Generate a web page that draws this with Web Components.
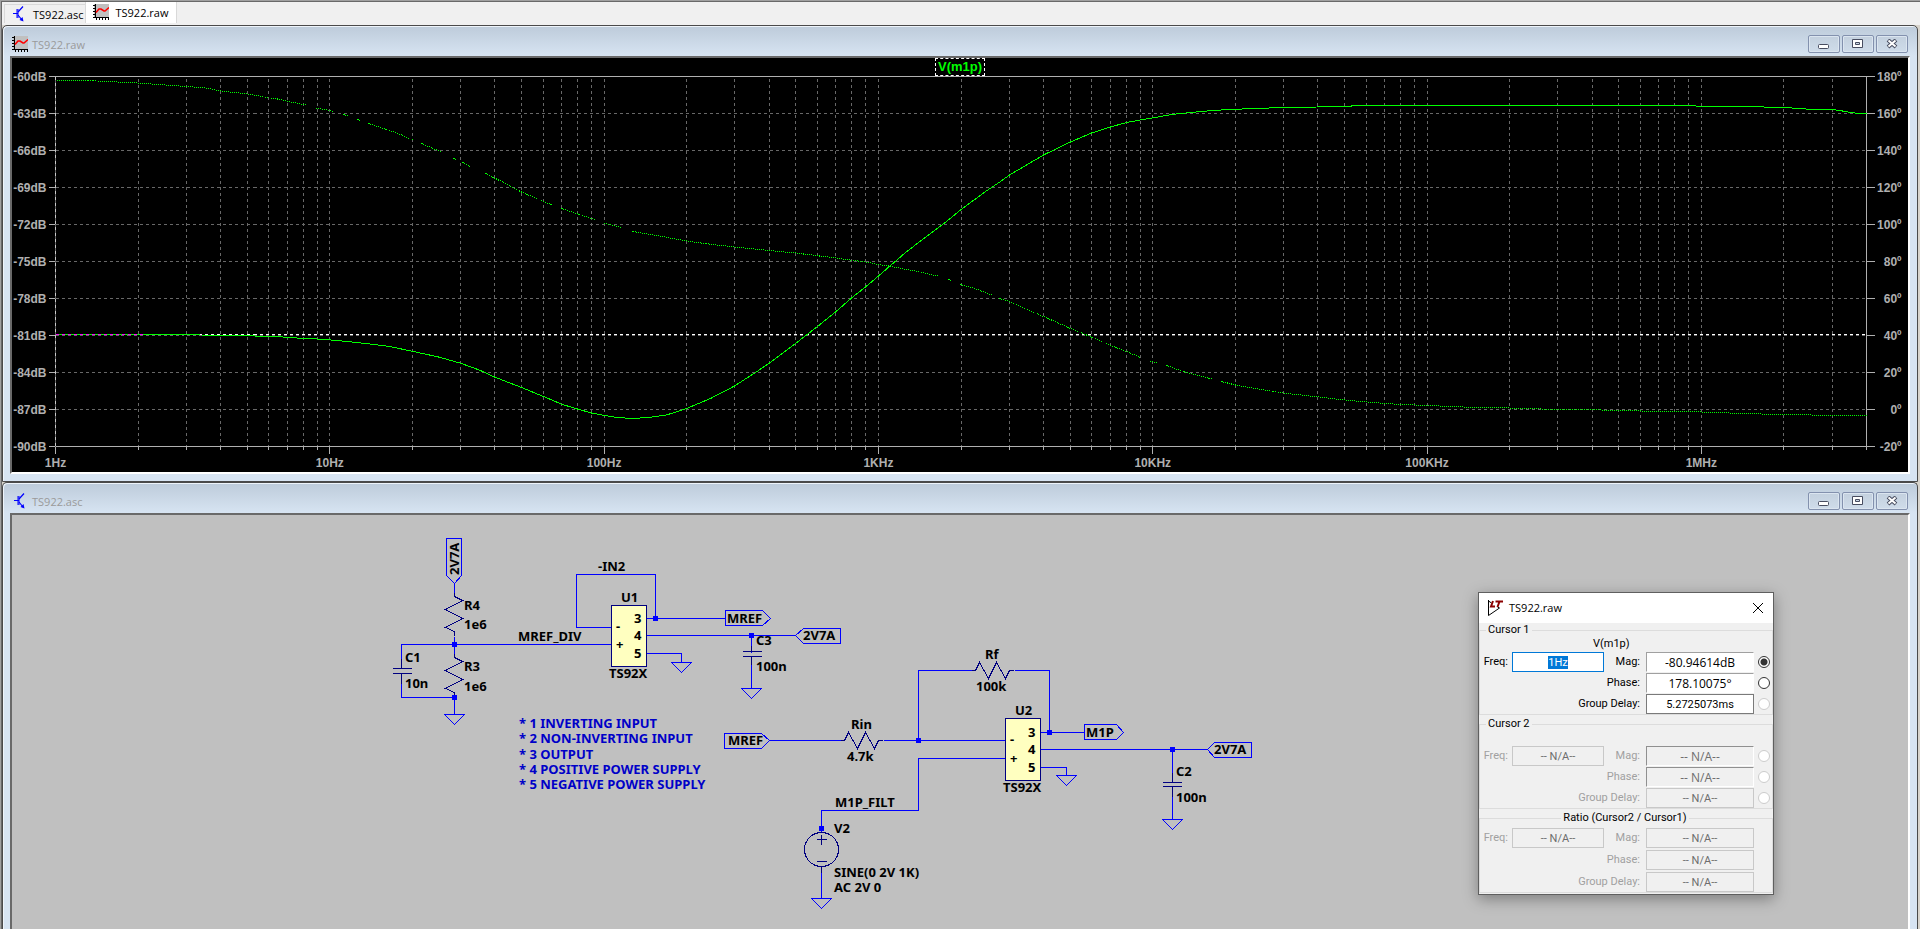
<!DOCTYPE html>
<html lang="en">
<head>
<meta charset="utf-8">
<title>TS922.raw</title>
<style>
  html, body { height: 100%; }
  body {
    margin: 0;
    overflow: hidden;
    background: #f0f0f0;
    font: 11px/16px "Open Sans", "Noto Sans", sans-serif;
  }
</style>
</head>
<body>
<lt-workspace>
  <lt-tab slot="tabs" icon="schematic">TS922.asc</lt-tab>
  <lt-tab slot="tabs" icon="waveform" active>TS922.raw</lt-tab>
  <mdi-window icon="waveform" caption="TS922.raw"><bode-plot></bode-plot></mdi-window>
  <mdi-window icon="schematic" caption="TS922.asc" fill>
    <schematic-sheet></schematic-sheet>
  </mdi-window>
  <cursor-dialog slot="dialog"></cursor-dialog>
</lt-workspace>

<script>
(() => {
  const define = (name, html, setup) => {
    const template = document.createElement("template");
    template.innerHTML = html;
    customElements.define(name, class extends HTMLElement {
      connectedCallback() {
        if (this.shadowRoot) return;
        this.attachShadow({ mode: "open" });
        this.shadowRoot.appendChild(template.content.cloneNode(true));
        if (setup) setup(this, this.shadowRoot);
      }
    });
  };

  const icons = {
    schematic: `<path d="M2 7.500h5M6 3v9M7 3v9" stroke="#00f"/><path d="M7 6l5-5.500M7 9l4 5" stroke="#00f" stroke-width="1.200" fill="none"/><path d="M12.500 15.500l-1-4.500-3 3z" fill="#00f"/>`,
    waveform: `<path d="M1 0h15v14H1z" fill="#c0c0c0"/><path d="M2.500 0v14M0 1.500h2M0 4.500h2M0 7.500h2M0 10.500h2M0 13.500h16M3.500 14v2M6.500 14v2M9.500 14v2M12.500 14v2M15.500 14v2" stroke="#000"/><path d="M3 8.500l3-3.500h2l3 2h1l4-3.500" stroke="#f00" stroke-width="1.600" fill="none"/>`,
    app: `<path d="M1.500 0v15.500l11-7.500M1.500 1l3 2M12.500 8l-2-1" stroke="#000" fill="none"/><path d="M6 1L4 6.500h4M8.500 1.500H16M12.500 1.500l-2 5.500" stroke="#8b0000" stroke-width="2" fill="none"/>`,
  };

  define("lt-icon", `
  <style>
    :host { display: block; flex: none; width: 16px; height: 16px; }
    svg { display: block; }
  </style>
  <svg width="16" height="16" aria-hidden="true"></svg>
  `, (host, root) => {
    root.querySelector("svg").innerHTML = icons[host.getAttribute("name")];
  });

  define("lt-tab", `
  <style>
    :host { display: block; padding-top: 2px; }
    :host([active]) { padding-top: 0; }
    button {
      display: flex;
      align-items: center;
      gap: 6px;
      height: 19px;
      padding: 0 2px 0 6px;
      border: solid #d9d9d9;
      border-width: 1px 0 0 1px;
      background: #f0f0f0;
      font: inherit;
      color: #000;
    }
    :host([active]) button {
      height: 21px;
      padding: 0 8px 2px 7px;
      border-width: 0 1px 0 1px;
      background: #fff;
    }
    span { padding-top: 2px; }
  </style>
  <button type="button" role="tab"><lt-icon></lt-icon><span><slot></slot></span></button>
  `, (host, root) => {
    root.querySelector("button").setAttribute("aria-selected", host.hasAttribute("active"));
    const icon = document.createElement("lt-icon");
    icon.setAttribute("name", host.getAttribute("icon"));
    root.querySelector("lt-icon").replaceWith(icon);
  });

  define("lt-workspace", `
  <style>
    :host {
      display: flex;
      flex-direction: column;
      box-sizing: border-box;
      height: 100vh;
      border: solid #696969;
      border-width: 1px 0 0 1px;
      outline: 1px solid #a0a0a0;
      margin: 1px 0 0 1px;
      overflow: hidden;
    }
    nav { display: flex; height: 23px; padding-left: 2px; }
    main {
      flex: 1;
      display: flex;
      flex-direction: column;
      min-height: 0;
      padding-right: 2px;
      background: #d8d4cc;
    }
  </style>
  <nav role="tablist"><slot name="tabs"></slot></nav>
  <main><slot></slot></main>
  <slot name="dialog"></slot>
  `);

  define("mdi-window", `
  <style>
    :host {
      display: flex;
      flex-direction: column;
      box-sizing: border-box;
      border: 1px solid #4a4a4a;
      border-radius: 5px 5px 0 0;
      background: linear-gradient(#bdcbda, #d7e4f2 30px);
      box-shadow: inset 1px 1px #eef4fa;
      padding: 0 7px;
    }
    :host([fill]) { flex: 1; min-height: 0; border-bottom: 0; }
    :host(:not([fill])) { padding-bottom: 7px; }
    header { display: flex; align-items: center; height: 30px; padding: 0 2px; color: #9a9a9a; }
    .caption { flex: 1; padding: 7px 0 0 4px; }
    lt-icon { padding-top: 5px; }
    .buttons { display: flex; gap: 2px; padding-top: 5px; }
    button {
      display: grid;
      place-items: center;
      width: 32px;
      height: 18px;
      padding: 0;
      border: 1px solid #8391ae;
      border-radius: 2px;
      background: linear-gradient(#c3d0de, #cfdcea);
      box-shadow: inset 0 0 0 1px #dbe5f0;
    }
    .content {
      flex: 1;
      min-height: 0;
      border-style: solid;
      border-color: #696969 #fff #fff #696969;
      border-width: 2px;
      overflow: hidden;
    }
    :host([fill]) .content { border-bottom: 0; }
  </style>
  <header>
    <lt-icon></lt-icon>
    <span class="caption"></span>
    <div class="buttons">
      <button type="button" aria-label="Minimize"><svg width="12" height="12"><rect x=".5" y="6.500" width="10" height="4" rx="1" fill="#fff" stroke="#484d60"/></svg></button>
      <button type="button" aria-label="Maximize"><svg width="12" height="10"><path d="M.5.5h10v8H.5zM3.500 3.500v2h4v-2z" fill="#fff" fill-rule="evenodd" stroke="#484d60"/></svg></button>
      <button type="button" aria-label="Close"><svg width="12" height="10"><path d="M2 1l8 7M10 1L2 8" stroke="#484d60" stroke-width="4"/><path d="M2.500 1.500l7 6M9.500 1.500l-7 6" stroke="#fff" stroke-width="2"/></svg></button>
    </div>
  </header>
  <div class="content"><slot></slot></div>
  `, (host, root) => {
    root.querySelector(".caption").textContent = host.getAttribute("caption");
    const icon = document.createElement("lt-icon");
    icon.setAttribute("name", host.getAttribute("icon"));
    root.querySelector("lt-icon").replaceWith(icon);
  });

  // Traces in frame units: 1811 wide (log frequency), 370 tall.
  const magnitude = "90,258 199,259 200,260 227,260 228,261 255,262 282,264 310,267 334,270 358,275 383,280.500 406,287 425,294 439,300.500 466,311 488,320 507,328 522,332.500 536,336.500 549,339 562,341 577,342 593,341 611,338.500 631,332 655,322 679,309.500 700,296 714,286.500 740,267 762,250 780,235.500 796,221.500 810,210.500 823,199.500 850,176 871,160 891,145 905,133.500 930,115 945,105 954,98.500 988,78.500 1015,65.500 1036,56.500 1055,50.500 1071,46 1085,43.500 1097,41.500 1116,38 1145,35 1173,33 1200,32 1228,31 1295,30 1297,29 1640,29 1641,30 1708,30 1709,31 1736,31 1737,32 1750,32 1751,33 1777,33 1787,34.500 1795,36 1804,37 1811,37";
  const phase = [
    "1,4 33,4 49,5 75,6 89,7 102,8 117,9 130,10 145,11 153,12 163,14 178,16 188,17 195,18 211,21 222,22.500 238,26 251,28.500",
    "261,31.500 274,34 279,35",
    "288,38 293,39.500",
    "302,43 305,44",
    "313,47 330,52.500 345,58 358,64",
    "366,67 387,76",
    "398,82 401,83.500",
    "407,86 415,90",
    "430,97 447,105.500 466,115.500 488,125 497,128.500",
    "506,132 522,137.500 536,142 540,143",
    "549,146.500 566,151",
    "577,155 595,158 612,161 631,164.500 653,167.500 679,170.500 714,174 740,176.500 780,181.500 810,185.500 823,188 833,189.500 862,195 882,199.500",
    "893,203 897,204",
    "905,208 919,212 936,218.500",
    "944,222 954,225 967,231 988,240 1015,252 1037,261 1055,269 1071,275 1085,281",
    "1095,284.500 1102,286.500",
    "1111,289 1129,295.500 1147,300 1157,302.500",
    "1166,305 1180,308.500 1203,312.500 1228,316.500 1263,320.500 1289,323.500 1311,325.500 1338,327.500 1372,329 1407,330.500 1454,331.500 1503,333 1545,333.500 1585,334.500 1646,335.500 1688,337 1722,338 1755,338.500 1811,339.500",
  ];

  define("bode-plot", `
  <style>
    :host { display: flex; flex-direction: column; background: #000; }
    .trace { align-self: center; height: 16px; padding: 0 2px; border: 1px dashed #fff; font: bold 13px/15px "Liberation Sans", sans-serif; color: #00ff00; }
    .frame { margin: 0 42px 26px 43px; }
    svg { display: block; width: 100%; height: 370px; overflow: visible; }
    text { font: bold 12px "Liberation Sans", sans-serif; fill: #b0b0b0; }
    .grid { stroke: #686868; stroke-dasharray: 3 3; }
    .edge { stroke: #686868; }
    .axis { stroke: #b0b0b0; }
    .marker { stroke: #c8c8c8; stroke-dasharray: 3 3; }
    .cursor { stroke: #fff; stroke-dasharray: 3 3; }
    polyline { fill: none; stroke: #00ff00; vector-effect: non-scaling-stroke; }
    .phase { stroke-dasharray: 1 1; }
    .overlap { stroke: #ff00ff; stroke-dasharray: 3 3; }
  </style>
  <div class="trace">V(m1p)</div>
  <div class="frame"><svg shape-rendering="crispEdges"></svg></div>
  `, (host, root) => {
    const span = Math.log10(4e6);
    const pos = (hz) => (Math.log10(hz) / span) * 100 + "%";
    const line = (cls, x1, y1, x2, y2) =>
      `<line class="${cls}" x1="${x1}" y1="${y1}" x2="${x2}" y2="${y2}"/>`;
    let out = "";
    for (let i = 0; i <= 10; i++) {
      const y = i * 37;
      if (i > 0 && i < 10) out += line("grid", 0, y, "100%", y);
      out += line("axis", -7, y, 0, y);
      out += `<text x="-9" y="${y + 4}" text-anchor="end">${-60 - i * 3}dB</text>`;
      out += `<svg x="100%" overflow="visible">${line("axis", 0, y, 8, y)}<text x="35" y="${y + 4}" text-anchor="end">${180 - i * 20}º</text></svg>`;
    }
    const names = ["1Hz", "10Hz", "100Hz", "1KHz", "10KHz", "100KHz", "1MHz"];
    names.forEach((name, d) => {
      for (let k = 1; k < 10; k++) {
        const hz = k * 10 ** d;
        if (hz > 4e6) break;
        const x = pos(hz);
        if (hz > 1 && hz < 4e6) out += line("grid", x, 2, x, 370);
        out += line("axis", x, 370, x, k === 1 ? 377 : 373);
      }
      out += `<text x="${pos(10 ** d)}" y="390" text-anchor="middle">${name}</text>`;
    });
    out += line("axis", 0, 0, "100%", 0) + line("axis", 0, 370, "100%", 370) + line("axis", "100%", 0, "100%", 370);
    out += line("edge", 0, 0, 0, 370) + line("marker", 0, 0, 0, 370) + line("cursor", 0, 258, "100%", 258);
    const traces = `<svg width="100%" height="370" viewBox="0 0 1811 370" preserveAspectRatio="none">
      <polyline points="0,258 90,258"/>
      <polyline class="overlap" points="0,258 90,258"/>
      <polyline points="${magnitude}"/>
      ${phase.map((p) => `<polyline class="phase" points="${p}"/>`).join("")}
    </svg>`;
    root.querySelector("svg").innerHTML = `<g transform="translate(.5 .5)">${out}${traces}</g>`;
  });

  const resistorV = (x, y) => `<path class="part" d="M${x} ${y}v4l8 4-17 9 17 9-17 9 9 4v4"/>`;
  const resistorH = (x, y) => `<path class="part" d="M${x} ${y}h4l4-8 9 16 8-16 9 16 4-8h4"/>`;
  const ground = (x, y) => `<path d="M${x - 10} ${y}h20l-10 10z"/>`;
  const node = (x, y) => `<rect class="node" x="${x - 2}" y="${y - 2}" width="4" height="4"/>`;
  const label = (x, y, text) => `<text x="${x}" y="${y}">${text}</text>`;
  const opamp = (x, y, h) => `<rect class="chip" x="${x}" y="${y}" width="35" height="${h}"/>`;

  define("schematic-sheet", `
  <style>
    :host { display: block; height: 100%; background: #c0c0c0; }
    svg { display: block; width: 100%; height: 100%; }
    path, rect, circle { fill: none; stroke: #0000ff; }
    .part { stroke: #000080; }
    .chip { fill: #ffffc0; stroke: #000080; }
    .node { fill: #0000ff; }
    text { font: bold 13px "Noto Sans", sans-serif; fill: #000; }
    .note text { fill: #0000c8; }
  </style>
  <svg>
    <g class="wires" transform="translate(-11.500 -514.500)" shape-rendering="crispEdges"></g>
    <g class="labels" transform="translate(-12 -515)"></g>
  </svg>
  `, (host, root) => {
    const notes = ["* 1 INVERTING INPUT", "* 2 NON-INVERTING INPUT", "* 3 OUTPUT", "* 4 POSITIVE POWER SUPPLY", "* 5 NEGATIVE POWER SUPPLY"];
    root.querySelector(".wires").innerHTML = `
      <path d="M446 538h15v37l-7 8-8-8zM454 583v9M454 636v17M454 697v17M401 668v-24h210M401 673v24h53"/>
      ${resistorV(454, 592)}${resistorV(454, 653)}
      <path class="part" d="M401 658v10M392 668h19M392 673h19M401 673v10"/>
      ${ground(454, 714)}${node(454, 644)}${node(454, 697)}
      <path d="M611 627h-35v-53h79v44M646 618h79M725 610h37l8 8-8 7h-37zM646 635h149l8-7h37v15h-37l-8-8M646 653h35v9M751 635v17M751 656v32"/>
      <path class="part" d="M751 645v6M742 651h19M742 656h19M751 656v8"/>
      ${ground(681, 662)}${ground(751, 688)}${node(655, 618)}${node(751, 635)}
      ${opamp(611, 605, 61)}

      <path d="M724 733h37l8 7-8 8h-37zM769 740h71M883 740h122M918 740v-70h54M1014 670h35v62M1040 732h44M1084 724h32l7 8-7 7h-32zM1040 749h167l7-7h37v15h-37l-7-8M1040 767h26v8M1172 749v33M1172 786v33M1005 758h-87v52h-97v22M821 866v32"/>
      ${resistorH(840, 740)}${resistorH(971, 670)}
      <path class="part" d="M1172 772v10M1162 782h19M1162 786h19M1172 786v10M821 834v10M816 839h10M816 861h10M821 866v6"/>
      <circle class="part" cx="821" cy="849" r="17"/>
      ${ground(1066, 775)}${ground(1172, 819)}${ground(821, 898)}
      ${node(918, 740)}${node(1049, 732)}${node(1172, 749)}${node(821, 828)}
      ${opamp(1005, 718, 62)}`;
    root.querySelector(".labels").innerHTML = `
      <text transform="translate(459 575) rotate(-90)">2V7A</text>
      ${label(464, 610, "R4")}${label(464, 629, "1e6")}${label(464, 671, "R3")}${label(464, 691, "1e6")}
      ${label(405, 662, "C1")}${label(405, 688, "10n")}
      ${label(518, 641, "MREF_DIV")}${label(598, 571, "-IN2")}${label(621, 602, "U1")}${label(609, 678, "TS92X")}
      ${label(616, 631, "-")}${label(616, 649, "+")}${label(634, 623, "3")}${label(634, 640, "4")}${label(634, 658, "5")}
      ${label(727, 623, "MREF")}${label(803, 640, "2V7A")}${label(756, 645, "C3")}${label(756, 671, "100n")}
      ${label(728, 745, "MREF")}${label(851, 729, "Rin")}${label(847, 761, "4.7k")}
      ${label(985, 659, "Rf")}${label(976, 691, "100k")}${label(1015, 715, "U2")}${label(1003, 792, "TS92X")}
      ${label(1010, 744, "-")}${label(1010, 763, "+")}${label(1028, 737, "3")}${label(1028, 754, "4")}${label(1028, 772, "5")}
      ${label(1086, 737, "M1P")}${label(1214, 754, "2V7A")}${label(1176, 776, "C2")}${label(1176, 802, "100n")}
      ${label(835, 807, "M1P_FILT")}${label(834, 833, "V2")}${label(834, 877, "SINE(0 2V 1K)")}${label(834, 892, "AC 2V 0")}
      <g class="note">${notes.map((note, i) => label(519, 728 + Math.round(i * 15.25), note)).join("")}</g>`;
  });

  define("cursor-group", `
  <style>
    :host { display: block; font: 11px/14px Roboto, sans-serif; }
    fieldset { margin: 0; padding: 0 2px 0 0; border: 1px solid #dcdcdc; min-width: 0; }
    legend { margin-left: 6px; padding: 0 2px; height: 14px; }
    :host([center]) legend { margin: 0 auto; }
    .name { height: 15px; padding-left: 113px; }
    :host([center]) .name { height: 3px; }
    .rows {
      display: grid;
      grid-template-columns: 28px 92px 1fr 108px 12px;
      grid-auto-rows: 20px;
      align-items: center;
      gap: 1px 4px;
    }
    :host([center]) .rows { row-gap: 2px; }
    label { text-align: right; }
    .mag { padding-right: 2px; }
    .wide { grid-column: 1 / 4; padding-right: 2px; }
    input { box-sizing: border-box; margin: 0; }
    input[type="text"] {
      width: 100%;
      height: 20px;
      padding: 0;
      border: 1px solid #7a7a7a;
      background: #fff;
      font: inherit;
      text-align: center;
      outline: 0;
    }
    input.big[type="text"] { font: 12px "Open Sans", sans-serif; border-color: #a0a0a0 #fff #fff #a0a0a0; }
    input.freq[type="text"] { border: 1px solid #0078d7; }
    input::selection { background: #0078d7; color: #fff; }
    :host([disabled]) label { color: #a0a0a0; }
    :host([disabled]) input[type="text"] { background: #f0f0f0; color: #6d6d6d; border: 1px solid #c8c8c8; }
    :host([disabled]) input.big[type="text"] { border-color: #909090 #fff #fff #909090; }
    input[type="radio"] { appearance: none; width: 12px; height: 12px; border: 1px solid #333; border-radius: 50%; background: #fff; }
    input[type="radio"]:checked { background: radial-gradient(#333 0 3px, #fff 4px); }
    input[type="radio"]:disabled { border-color: #ccc; }
  </style>
  <fieldset>
    <legend></legend>
    <div class="name"></div>
    <div class="rows">
      <label for="freq">Freq:</label><input type="text" id="freq" class="freq">
      <label for="mag" class="mag">Mag:</label><input type="text" id="mag" class="big" readonly><input type="radio" name="attach" aria-label="Use magnitude">
      <label for="phase" class="wide">Phase:</label><input type="text" id="phase" class="big" readonly><input type="radio" name="attach" aria-label="Use phase">
      <label for="delay" class="wide">Group Delay:</label><input type="text" id="delay" readonly><input type="radio" name="attach" aria-label="Use group delay">
    </div>
  </fieldset>
  `, (host, root) => {
    root.querySelector("legend").textContent = host.getAttribute("caption");
    root.querySelector(".name").textContent = host.getAttribute("trace") || "";
    const values = (host.getAttribute("values") || "-- N/A--|-- N/A--|-- N/A--|-- N/A--").split("|");
    const disabled = host.hasAttribute("disabled");
    const radios = root.querySelectorAll('input[type="radio"]');
    root.querySelectorAll('input[type="text"]').forEach((input, i) => {
      input.value = values[i];
      input.disabled = disabled;
      if (host.hasAttribute("center")) input.classList.remove("big");
    });
    radios.forEach((radio, i) => {
      radio.disabled = disabled || i === 2;
      radio.checked = !disabled && i === 0;
      if (host.hasAttribute("center")) radio.style.visibility = "hidden";
    });
    if (!disabled) {
      const freq = root.getElementById("freq");
      freq.focus();
      freq.select();
    }
  });

  define("cursor-dialog", `
  <style>
    /* floating window, drawn over the schematic */
    :host {
      position: absolute;
      right: 146px;
      top: 592px;
      width: 294px;
      border: 1px solid #5f5f5f;
      background: #f0f0f0;
      box-shadow: 0 4px 14px rgba(0, 0, 0, .35);
    }
    header { display: flex; align-items: center; gap: 6px; height: 30px; padding: 0 9px 0 8px; background: #fff; }
    h1 { flex: 1; margin: 0; font: inherit; }
    button { padding: 0; border: 0; background: none; }
    button svg { display: block; }
    .groups { display: flex; flex-direction: column; gap: 2px; padding-bottom: 1px; }
  </style>
  <header>
    <lt-icon name="app"></lt-icon>
    <h1>TS922.raw</h1>
    <button type="button" aria-label="Close"><svg width="12" height="12"><path d="M1 1l10 10M11 1L1 11" stroke="#000"/></svg></button>
  </header>
  <div class="groups">
    <cursor-group caption="Cursor 1" trace="V(m1p)" values="1Hz|-80.94614dB|178.10075°|5.2725073ms"></cursor-group>
    <cursor-group caption="Cursor 2" disabled></cursor-group>
    <cursor-group caption="Ratio (Cursor2 / Cursor1)" disabled center></cursor-group>
  </div>
  `);
})();
</script>
</body>
</html>
